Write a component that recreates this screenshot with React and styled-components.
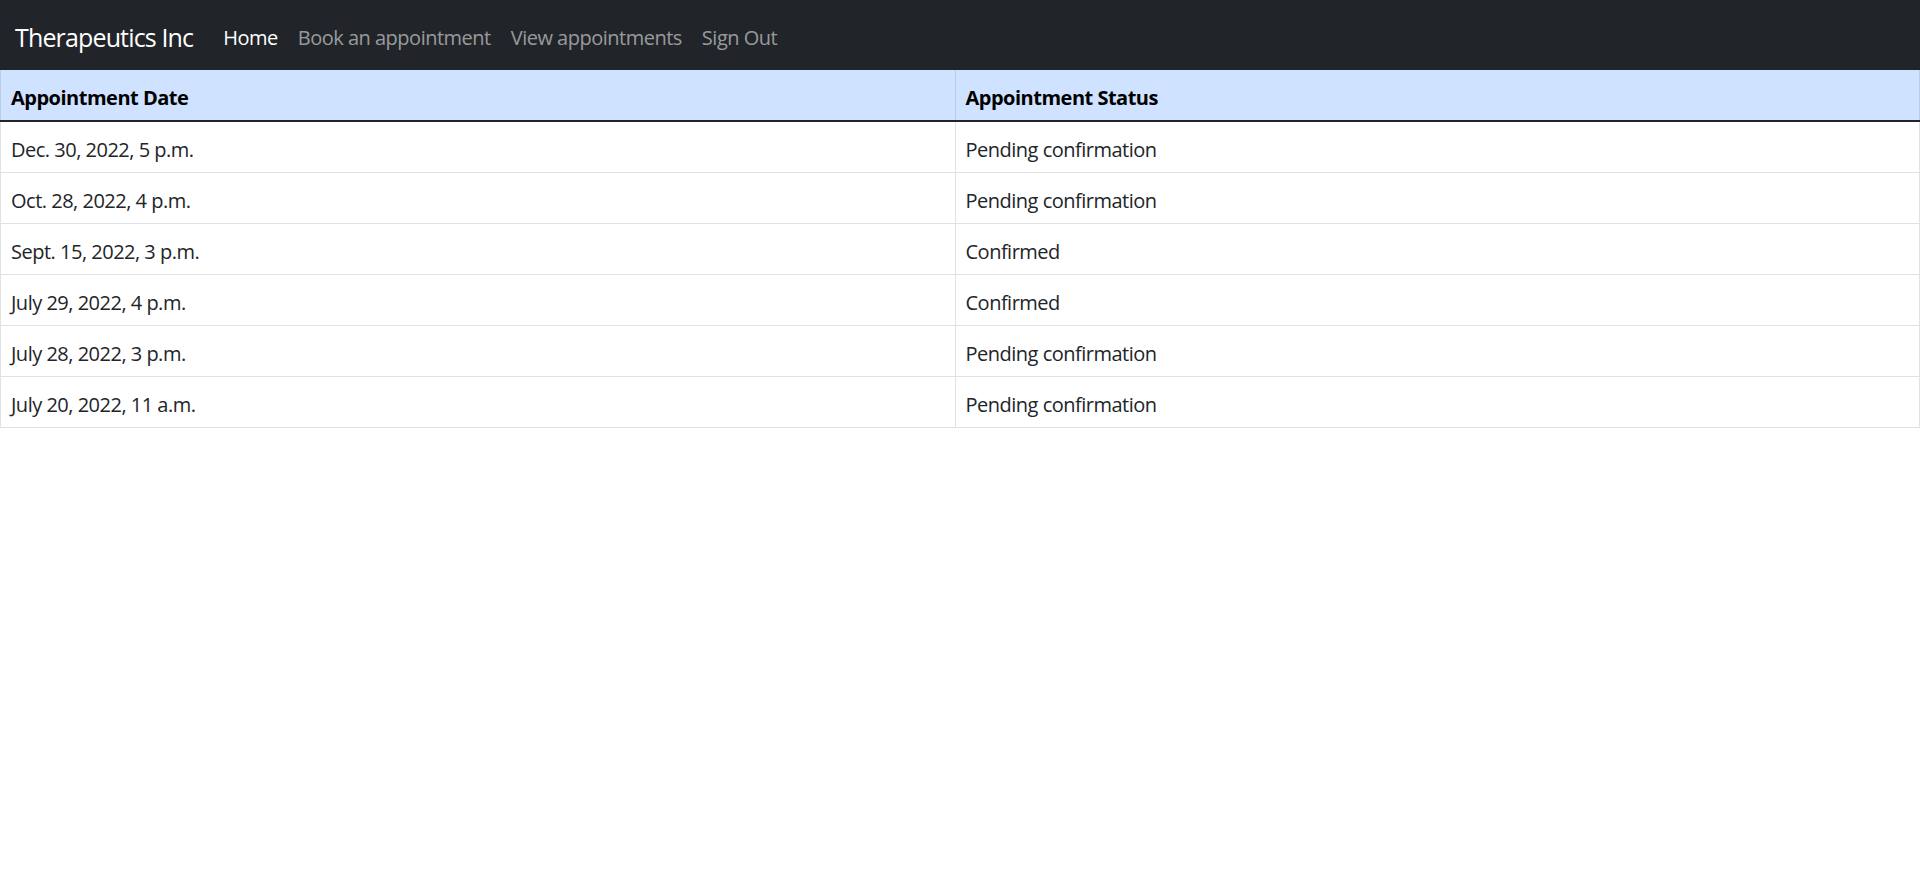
import React from 'react'
import styled, { createGlobalStyle } from 'styled-components'

const GlobalStyle = createGlobalStyle`
  body {
    margin: 0;
    background: #fff;
    font-family: "Open Sans", "Noto Sans", sans-serif;
    color: #212529;
  }
`

const appointments = [
  { date: 'Dec. 30, 2022, 5 p.m.', status: 'Pending confirmation' },
  { date: 'Oct. 28, 2022, 4 p.m.', status: 'Pending confirmation' },
  { date: 'Sept. 15, 2022, 3 p.m.', status: 'Confirmed' },
  { date: 'July 29, 2022, 4 p.m.', status: 'Confirmed' },
  { date: 'July 28, 2022, 3 p.m.', status: 'Pending confirmation' },
  { date: 'July 20, 2022, 11 a.m.', status: 'Pending confirmation' },
]

const links = ['Home', 'Book an appointment', 'View appointments', 'Sign Out']

function App() {
  return (
    <>
      <GlobalStyle />
      <Navbar>
        <Brand href="#">Therapeutics Inc</Brand>
        <NavList>
          {links.map((l, i) => (
            <NavLink key={l} href="#" $active={i === 0}>{l}</NavLink>
          ))}
        </NavList>
      </Navbar>
      <Table>
        <thead>
          <HeadRow>
            <Th style={{ width: '49.74%' }}>Appointment Date</Th>
            <Th>Appointment Status</Th>
          </HeadRow>
        </thead>
        <tbody>
          {appointments.map((a) => (
            <tr key={a.date}>
              <Td>{a.date}</Td>
              <Td>{a.status}</Td>
            </tr>
          ))}
        </tbody>
      </Table>
    </>
  )
}

export default App

const Navbar = styled.nav`
  display: flex;
  align-items: center;
  height: 70px;
  padding: 0 15px;
  background: #212529;
  box-sizing: border-box;
`
const Brand = styled.a`
  font-size: 25px;
  line-height: 37px;
  padding-top: 5px;
  color: #fff;
  text-decoration: none;
  margin-right: 20px;
  letter-spacing: -0.85px;
`
const NavList = styled.div`
  display: flex;
  align-items: center;
`
const NavLink = styled.a`
  font-size: 20px;
  line-height: 30px;
  padding: 13px 10px 7px;
  letter-spacing: -0.5px;
  text-decoration: none;
  color: ${(p) => (p.$active ? '#fff' : 'rgba(255,255,255,.55)')};
`
const Table = styled.table`
  width: 100%;
  border-collapse: collapse;
  font-size: 20px;
  line-height: 30px;
  letter-spacing: -0.5px;
`
const HeadRow = styled.tr`
  background: #cfe2ff;
`
const Th = styled.th`
  text-align: left;
  font-weight: 700;
  color: #000;
  padding: 13px 10px 7px;
  border: 1px solid #bacbe6;
  border-bottom: 2px solid #212529;
  border-top: 0;
`
const Td = styled.td`
  padding: 13px 10px 7px;
  border: 1px solid #dee2e6;
  color: #212529;
`
